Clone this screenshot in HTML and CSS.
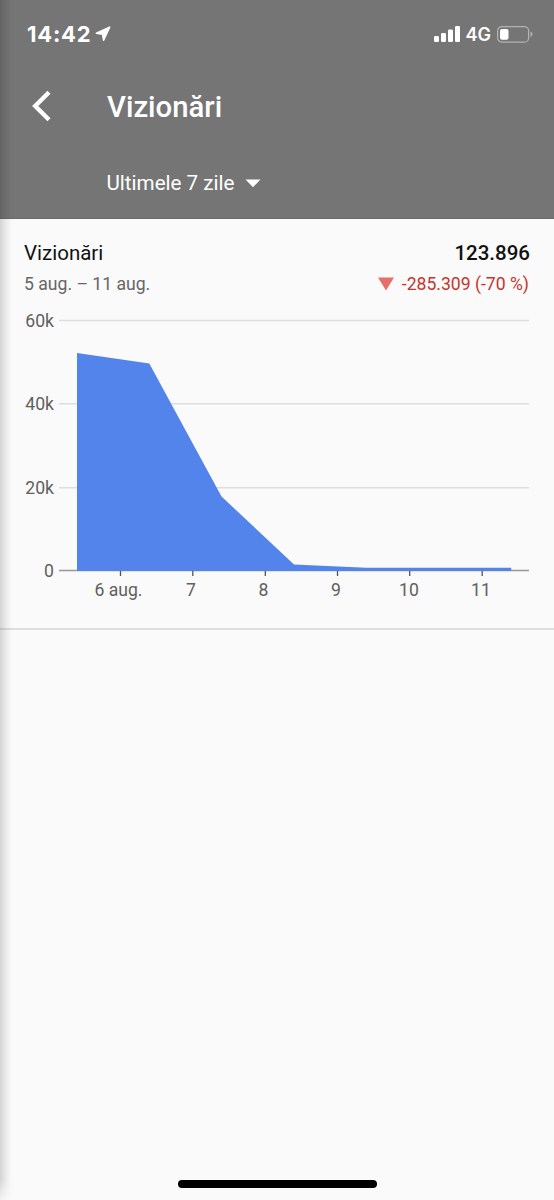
FILE: index.html
```html
<!DOCTYPE html>
<html lang="ro">
<head>
<meta charset="utf-8">
<title>Vizionări</title>
<link rel="stylesheet" href="styles.css">
</head>
<body>
<div class="screen">
  <header class="header">
    <div class="status">
      <div class="status-left">
        <span class="time">14:42</span>
        <svg class="location" width="16" height="16" viewBox="0 0 16 16"><path d="M14.600 1.200 8.600 14.200 7.600 8.300 1.400 7.300Z" fill="#fff" stroke="#fff" stroke-width="1.600" stroke-linejoin="round"/></svg>
      </div>
      <div class="status-right">
        <svg class="signal" width="26" height="16" viewBox="0 0 26 16" fill="#fff"><rect x="0" y="10" width="5" height="6" rx="1.2"/><rect x="7" y="7" width="5" height="9" rx="1.2"/><rect x="14" y="3.5" width="5" height="12.500" rx="1.2"/><rect x="21" y="0" width="5" height="16" rx="1.2"/></svg>
        <span class="network">4G</span>
        <svg class="battery" width="36" height="17" viewBox="0 0 36 17"><rect x=".6" y=".6" width="31" height="15.500" rx="4.200" fill="none" stroke="#b4b4b4" stroke-width="1.200"/><rect x="3" y="3" width="8.500" height="10.800" rx="2" fill="#fff"/><path d="M33.500 5.600C36 6.400 36 10.200 33.500 11Z" fill="#b4b4b4"/></svg>
      </div>
    </div>
    <div class="titlebar">
      <svg class="back" width="20" height="32" viewBox="0 0 20 32"><path d="M18 2.200 4.200 16 18 29.800" fill="none" stroke="#fff" stroke-width="4.400"/></svg>
      <h1 class="title">Vizionări</h1>
    </div>
    <div class="period"><span>Ultimele 7 zile</span><svg width="16" height="9" viewBox="0 0 16 9"><path d="M.5.500h15L8 8.200Z" fill="#fff"/></svg></div>
  </header>
  <section class="card">
    <div class="row metric"><span class="name">Vizionări</span><strong class="total">123.896</strong></div>
    <div class="row detail"><span class="dates">5 aug. – 11 aug.</span><span class="change"><svg width="16" height="14" viewBox="0 0 16 14"><path d="M0 .500h16L8 13.500Z" fill="#e66f69"/></svg><span>-285.309 (-70 %)</span></span></div>
    <svg class="chart" width="554" height="328" viewBox="0 300 554 328">
      <g class="grid"><path d="M59 320.500H529M59 403.700H529M59 487.700H529"/></g>
      <path class="axis" d="M59 570.500H529"/>
      <path class="area" d="M77 353 149.300 363.500 221.500 496.500 294 564.500 366 567.700H511.200V571H77Z"/>
      <path class="ticks" d="M120.500 571V576M192.800 571V576M265.300 571V576M337.500 571V576M409.700 571V576M482.200 571V576"/>
      <g class="ylabels"><text x="54" y="326.500">60k</text><text x="54" y="409.500">40k</text><text x="54" y="493.500">20k</text><text x="54" y="576.500">0</text></g>
      <g class="xlabels"><text x="118.500" y="596">6 aug.</text><text x="191" y="596">7</text><text x="263.500" y="596">8</text><text x="336" y="596">9</text><text x="409" y="596">10</text><text x="481" y="596">11</text></g>
    </svg>
  </section>
  <div class="edge-shadow"></div>
  <div class="home-indicator"></div>
</div>
</body>
</html>
```
FILE: styles.css
```css
body { margin: 0; }
* { box-sizing: border-box; }
.screen { position: relative; width: 554px; height: 1200px; overflow: hidden; background: #fafafa; font-family: Roboto, sans-serif; }
svg { display: block; flex: none; }
.header { height: 219px; background: #757575; color: #fff; border-bottom: 1px solid #6b6b6b; }
.status { height: 68px; padding: 0 21px 0 27px; display: flex; align-items: center; justify-content: space-between; }
.status-left, .status-right { display: flex; align-items: center; }
.time { font: 700 22px/24px Inter, sans-serif; letter-spacing: .8px; }
.location { margin-left: 4px; }
.network { margin: 2px 6px 0 6px; font: 600 18px/22px Inter, sans-serif; }
.titlebar { height: 76px; display: flex; align-items: center; padding-left: 31px; }
.title { margin: 2px 0 0 56px; font-size: 29.300px; line-height: 34px; font-weight: 500; }
.period { height: 78px; display: flex; align-items: center; gap: 10.500px; padding-left: 106.500px; font-size: 20.600px; line-height: 24px; }
.card { height: 411px; border-bottom: 2px solid #dedede; }
.row { display: flex; justify-content: space-between; align-items: center; padding: 0 24px; }
.metric { padding-top: 17px; height: 51px; font-size: 20.500px; color: #111; }
.total { font-weight: 500; }
.detail { height: 30px; padding-right: 25px; padding-bottom: 3px; font-size: 17.600px; color: #666; }
.change { display: flex; align-items: center; gap: 7.500px; color: #c5352d; }
.grid { stroke: #dedede; stroke-width: 1.500; }
.axis { stroke: #999; stroke-width: 1.500; }
.area { fill: #5284ec; }
.ticks { stroke: #555; stroke-width: 1.300; }
.chart text { font-size: 17.600px; fill: #606060; }
.ylabels { text-anchor: end; }
.xlabels { text-anchor: middle; }
.edge-shadow { position: absolute; top: 0; left: 0; width: 13px; height: 1200px; background: linear-gradient(to right, rgba(0,0,0,.15), rgba(0,0,0,.07) 40%, rgba(0,0,0,.02) 75%, transparent); -webkit-mask-image: linear-gradient(to bottom, #000 1180px, rgba(0,0,0,.2)); mask-image: linear-gradient(to bottom, #000 1180px, rgba(0,0,0,.2)); }
.home-indicator { position: absolute; left: 178px; top: 1180px; width: 199px; height: 8px; border-radius: 4px; background: #000; }
```
